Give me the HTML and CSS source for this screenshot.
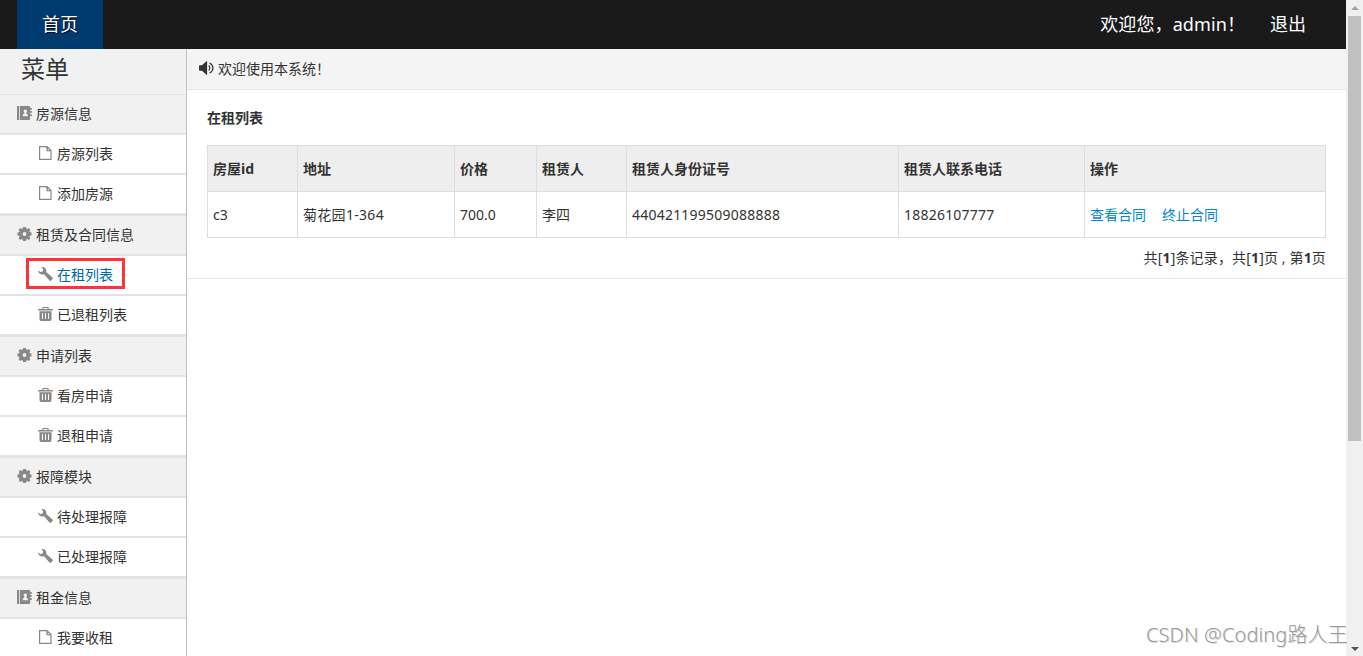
FILE: index.html
```html
<!DOCTYPE html>
<html lang="zh-CN">
<head>
<meta charset="utf-8">
<title>在租列表</title>
<link rel="stylesheet" href="styles.css">
</head>
<body>
<svg class="sprite" aria-hidden="true">
  <symbol id="book" viewBox="0 0 15 14"><path fill-rule="evenodd" d="M0 0h2v14H0zM2.800 0H12q1.200 0 1.200 1v1h1q.8 0 .8.900t-.8.900h-1v1.200h1q.8 0 .8.900t-.8.900h-1v1.500h1q.8 0 .8.900t-.8.900h-1V13q0 1-1.200 1H2.800zM8.300 3.400c-1.200 0-1.700.8-1.700 1.700 0 .8.300 1.300.8 1.700v.7L5.800 8.500v1.700h5V8.500L9.200 7.500v-.7c.5-.4.800-.9.800-1.700 0-.9-.5-1.700-1.700-1.700z"/></symbol>
  <symbol id="file" viewBox="0 0 15 14"><path fill="none" stroke="currentColor" stroke-width="1.200" d="M1.600.6h7.400l4 4v8.800H1.600zM9 .6v4h4"/></symbol>
  <symbol id="cog" viewBox="0 0 14 14"><path fill-rule="evenodd" d="M5.600 0h2.800l.4 1.600.9.400 1.500-.9 1.700 1.700-.9 1.500.4.900 1.600.4v2.800l-1.600.4-.4.900.9 1.500-1.700 1.700-1.500-.9-.9.400-.4 1.600H5.600l-.4-1.600-.9-.4-1.500.9-1.700-1.700.9-1.500-.4-.9L0 8.400V5.600l1.600-.4.400-.9-.9-1.500 1.700-1.700 1.500.9.900-.4zM7 5.100a1.900 1.900 0 1 0 0 3.800 1.900 1.900 0 0 0 0-3.800z"/></symbol>
  <symbol id="wrench" viewBox="0 0 15 14"><path d="M3.400.2C6.500-.5 9 2 8.200 5l6.300 5.600q.6.700 0 1.500l-1.400 1.500q-.8.700-1.600 0L6.100 7.300C3.300 8.100.3 6.500 0 3.400l2.400 1.700 2.300-.7.500-2.200z"/></symbol>
  <symbol id="trash" viewBox="0 0 15 14"><path fill-rule="evenodd" d="M4.300.8q0-.8.800-.8h4.800q.8 0 .8.800V2h3.500q.8 0 .8.800v.7H0v-.7Q0 2 .8 2h3.500zM5.500 1.100V2h4v-.9zM1.500 4.300h12V12q0 2-1.600 2H3.100q-1.600 0-1.600-2zM4 6v6h1V6zM7 6v6h1V6zM10 6v6h1V6z"/></symbol>
  <symbol id="volume" viewBox="0 0 15 14"><path d="M0 5q0-.8.8-.8H3L7.500.3q.6-.5.600.3v12.800q0 .8-.6.300L3 9.800H.8Q0 9.800 0 9z"/><path fill="none" stroke="currentColor" stroke-width="1.200" d="M9.700 4.500c1.400 1.500 1.400 3.500 0 5M10.700 2c4.300 2.500 4.300 7.500 0 10"/></symbol>
</svg>

<div class="window">
  <div class="page">
    <header class="navbar">
      <a class="nav-home">首页</a>
      <div class="nav-user"><span>欢迎您，admin！</span><a>退出</a></div>
    </header>
    <div class="layout">
      <aside class="sidebar">
        <h3 class="sidebar-title">菜单</h3>
        <div class="group">
          <div class="head"><svg class="icon"><use href="#book"/></svg>房源信息</div>
          <a class="item"><svg class="icon"><use href="#file"/></svg>房源列表</a>
          <a class="item"><svg class="icon"><use href="#file"/></svg>添加房源</a>
        </div>
        <div class="group">
          <div class="head"><svg class="icon"><use href="#cog"/></svg>租赁及合同信息</div>
          <a class="item active"><svg class="icon"><use href="#wrench"/></svg>在租列表</a>
          <a class="item"><svg class="icon"><use href="#trash"/></svg>已退租列表</a>
        </div>
        <div class="group">
          <div class="head"><svg class="icon"><use href="#cog"/></svg>申请列表</div>
          <a class="item"><svg class="icon"><use href="#trash"/></svg>看房申请</a>
          <a class="item"><svg class="icon"><use href="#trash"/></svg>退租申请</a>
        </div>
        <div class="group">
          <div class="head"><svg class="icon"><use href="#cog"/></svg>报障模块</div>
          <a class="item"><svg class="icon"><use href="#wrench"/></svg>待处理报障</a>
          <a class="item"><svg class="icon"><use href="#wrench"/></svg>已处理报障</a>
        </div>
        <div class="group">
          <div class="head"><svg class="icon"><use href="#book"/></svg>租金信息</div>
          <a class="item"><svg class="icon"><use href="#file"/></svg>我要收租</a>
        </div>
      </aside>
      <main class="main">
        <div class="notice"><svg class="icon"><use href="#volume"/></svg>欢迎使用本系统！</div>
        <section class="content">
          <h4 class="title">在租列表</h4>
          <table class="table">
            <colgroup><col class="c-id"><col class="c-addr"><col class="c-price"><col class="c-name"><col class="c-card"><col class="c-phone"><col class="c-op"></colgroup>
            <thead>
              <tr><th>房屋id</th><th>地址</th><th>价格</th><th>租赁人</th><th>租赁人身份证号</th><th>租赁人联系电话</th><th>操作</th></tr>
            </thead>
            <tbody>
              <tr><td>c3</td><td class="addr">菊花园1-364</td><td>700.0</td><td>李四</td><td class="num">440421199509088888</td><td class="num">18826107777</td><td><a class="link">查看合同</a><a class="link">终止合同</a></td></tr>
            </tbody>
          </table>
          <div class="pager">共[<b>1</b>]条记录，共[<b>1</b>]页 , 第<b>1</b>页</div>
        </section>
      </main>
    </div>
  </div>
  <div class="scrollbar"><i class="arrow up"></i><i class="thumb"></i><i class="arrow down"></i></div>
</div>
<div class="watermark">CSDN @Coding路人王</div>
</body>
</html>
```
FILE: styles.css
```css
* { box-sizing: border-box; }
body {
  margin: 0;
  height: 656px;
  overflow: hidden;
  background: #fff;
  color: #333;
  font: 14px/20px "Noto Sans", "Noto Sans CJK SC", sans-serif;
}
.sprite { display: none; }
.icon { flex: none; width: 15px; height: 14px; margin-right: 4px; fill: currentColor; }
.window { display: flex; height: 656px; overflow: hidden; }
.page { flex: 1; display: flex; flex-direction: column; min-width: 0; }

.navbar {
  flex: none;
  display: flex;
  justify-content: space-between;
  height: 49px;
  padding: 0 40px 0 17px;
  background: #1a1a1a;
  color: #fff;
  font-size: 18px;
  line-height: 49px;
}
.nav-home { width: 86px; background: #003b70; text-align: center; text-shadow: 1px 1px 1px #001; }
.nav-user { display: flex; gap: 25px; }
.nav-user span { letter-spacing: .1px; }

.layout { flex: 1; display: flex; min-height: 0; }
.sidebar { flex: none; width: 187px; border-right: 1px solid #c0c0c0; overflow: hidden; }
.sidebar-title {
  height: 46px;
  margin: 0;
  padding-left: 21px;
  border-bottom: 1px solid #e1e1e1;
  background: #f1f1f1;
  font-size: 24px;
  font-weight: 400;
  line-height: 40px;
}
.group { border-bottom: 1px solid #e3e3e3; }
.head, .item { display: flex; align-items: center; height: 40px; border-bottom: 2px solid #e3e3e3; }
.head { padding-left: 17px; background: #f1f1f1; }
.item { padding-left: 38px; }
.head .icon, .item .icon { color: #888; margin-top: -2px; }
.active { position: relative; color: #0066a8; }
.active::after {
  content: "";
  box-sizing: border-box;
  position: absolute;
  left: 26px;
  top: 2px;
  width: 99px;
  height: 31px;
  border: 3px solid #fb3535;
}

.main { flex: 1; min-width: 0; }
.notice {
  display: flex;
  align-items: center;
  height: 41px;
  padding-left: 12px;
  border-bottom: 1px solid #e5e5e5;
  background: #f4f4f4;
}
.notice .icon { margin-top: -2px; }
.content { height: 189px; padding: 18px 20px 0; border-bottom: 1px solid #e5e5e5; }
.title { margin: 0 0 17px; font-size: 14px; font-weight: 700; line-height: 20px; }
.table {
  width: 1119px;
  table-layout: fixed;
  border-collapse: separate;
  border-spacing: 0;
  border-top: 1px solid #ddd;
  border-left: 1px solid #ddd;
}
.table th, .table td {
  height: 46px;
  padding: 0 5px;
  border-right: 1px solid #ddd;
  border-bottom: 1px solid #ddd;
  text-align: left;
  white-space: nowrap;
}
.table th { background: #eee; }
.num { letter-spacing: .22px; }
.addr { letter-spacing: .3px; }
.c-id, .c-name { width: 90px; }
.c-addr { width: 157px; }
.c-price { width: 82px; }
.c-card { width: 272px; }
.c-phone { width: 186px; }
.c-op { width: 241px; }
.link { margin-right: 16px; color: #08c; }
.pager { margin-top: 10px; text-align: right; letter-spacing: .15px; }

.scrollbar {
  flex: none;
  display: flex;
  flex-direction: column;
  align-items: center;
  width: 17px;
  padding: 6px 2px 5px;
  background: #f0f0f0;
}
.arrow { border: 4px solid transparent; }
.up { margin-bottom: 6px; border-top: 0; border-bottom-color: #a3a3a3; }
.thumb { width: 13px; height: 425px; background: #c0c0c0; }
.down { margin-top: auto; border-bottom: 0; border-top-color: #505050; }
.watermark {
  position: absolute;
  left: 1146px;
  top: 620px;
  color: #999;
  font-size: 20px;
  font-weight: 300;
  line-height: 30px;
  letter-spacing: .12px;
  white-space: nowrap;
  text-shadow: 1px 1px 0 #e2e2e2;
}
```
